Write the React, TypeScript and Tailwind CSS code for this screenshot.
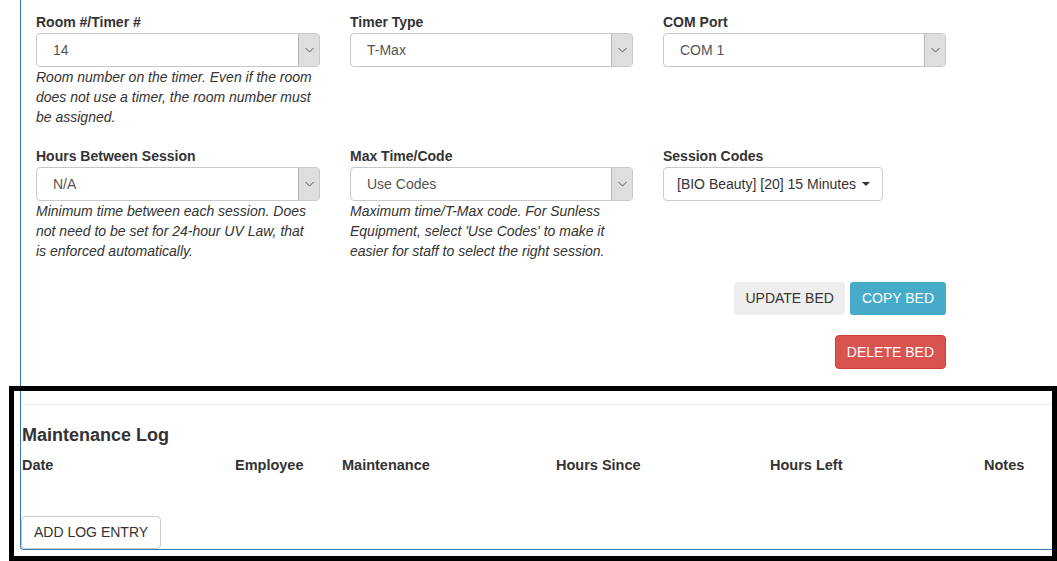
import React from "react";

const font = { fontFamily: '"Liberation Sans", Arial, sans-serif' };

function Select({ value }: { value: string }) {
  return (
    <div className="flex h-[34px] w-full items-stretch rounded-[4px] border border-[#c8c8c8] bg-white">
      <div className="flex flex-1 items-center pl-[16px] text-[14px] text-[#555]">{value}</div>
      <div className="flex w-[21px] items-center justify-center rounded-r-[3px] border-l border-[#b5b5b5] bg-[#dedede]">
        <svg width="9" height="6" viewBox="0 0 9 6">
          <path d="M0.5 1 L4.5 5 L8.5 1" fill="none" stroke="#555" strokeWidth="1" />
        </svg>
      </div>
    </div>
  );
}

function Field({ label, children, help }: { label: string; children: React.ReactNode; help?: string }) {
  return (
    <div className="flex flex-col">
      <div className="mb-[1px] text-[14px] font-bold leading-[20px] text-[#333]">{label}</div>
      {children}
      {help && <div className="max-w-[280px] text-[14px] italic leading-[20px] text-[#333]">{help}</div>}
    </div>
  );
}

export default function App() {
  return (
    <div className="relative h-[561px] w-[1057px] overflow-hidden bg-white" style={font}>
      <div className="ml-[20px] h-[550px] rounded-bl-[4px] border-b border-l border-[#337ab7]">
        <div className="pl-[15px] pt-[12px]">
          <div className="grid grid-cols-[284px_283px_283px] gap-x-[30px]">
            <Field label="Room #/Timer #" help="Room number on the timer. Even if the room does not use a timer, the room number must be assigned.">
              <Select value="14" />
            </Field>
            <Field label="Timer Type">
              <Select value="T-Max" />
            </Field>
            <Field label="COM Port">
              <Select value="COM 1" />
            </Field>
          </div>
          <div className="mt-[19px] grid grid-cols-[284px_283px_283px] gap-x-[30px]">
            <Field label="Hours Between Session" help="Minimum time between each session. Does not need to be set for 24-hour UV Law, that is enforced automatically.">
              <Select value="N/A" />
            </Field>
            <Field label="Max Time/Code" help="Maximum time/T-Max code. For Sunless Equipment, select 'Use Codes' to make it easier for staff to select the right session.">
              <Select value="Use Codes" />
            </Field>
            <Field label="Session Codes">
              <div className="flex">
                <div className="flex h-[34px] items-center gap-[6px] rounded-[4px] border border-[#ccc] bg-white pl-[13px] pr-[12px] text-[14px] text-[#333]">
                  <span>[BIO Beauty] [20] 15 Minutes</span>
                  <svg width="8" height="4" viewBox="0 0 8 4">
                    <path d="M0 0 L8 0 L4 4 Z" fill="#333" />
                  </svg>
                </div>
              </div>
            </Field>
          </div>
          <div className="mt-[21px] flex w-[910px] justify-end gap-[5px]">
            <button className="h-[33px] rounded-[4px] bg-[#eeeeee] px-[11px] text-[14px] text-[#333]">UPDATE BED</button>
            <button className="h-[33px] rounded-[3px] bg-[#46abc9] px-[12px] text-[14px] text-white">COPY BED</button>
          </div>
          <div className="mt-[20px] flex w-[910px] justify-end">
            <button className="h-[34px] rounded-[4px] border border-[#d43f3a] bg-[#d9534f] px-[11px] text-[14px] text-white">DELETE BED</button>
          </div>
        </div>
        <div className="mt-[35px] border-t border-[#eeeeee]" />
        <div className="pt-[18px]">
          <div className="pl-[1px] text-[18px] font-bold leading-[24px] text-[#333]">Maintenance Log</div>
          <div className="mt-[8px] grid grid-cols-[213px_107px_214px_214px_214px_1fr] pl-[1px] text-[14.5px] font-bold leading-[20px] text-[#333]">
            <div>Date</div>
            <div>Employee</div>
            <div>Maintenance</div>
            <div>Hours Since</div>
            <div>Hours Left</div>
            <div>Notes</div>
          </div>
          <div className="mt-[41px]">
            <button className="h-[33px] rounded-[4px] border border-[#ccc] bg-white px-[12px] text-[14px] text-[#333]">ADD LOG ENTRY</button>
          </div>
        </div>
      </div>
      <div className="pointer-events-none absolute left-[9px] top-[386px] h-[175px] w-[1048px] border-[5px] border-black" />
    </div>
  );
}
